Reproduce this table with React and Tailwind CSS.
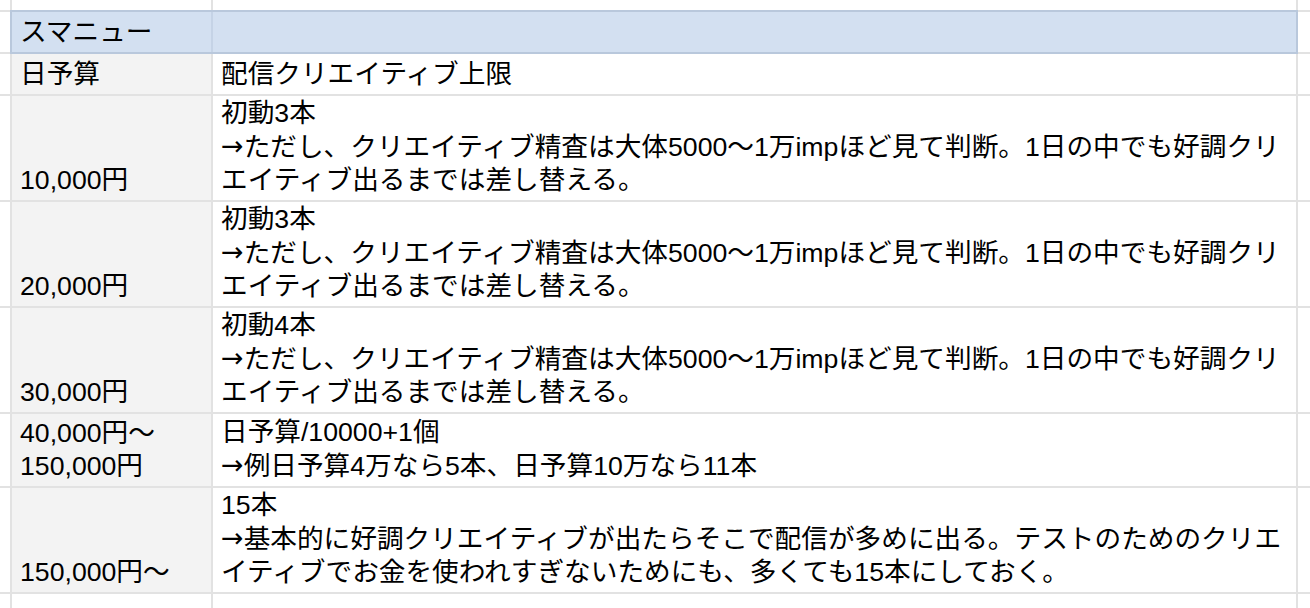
import React from "react";

const font = {
  fontFamily: '"Liberation Sans", "Noto Sans CJK JP", sans-serif',
};

function Arrow() {
  return (
    <span className="relative -top-[1px] font-['DejaVu_Sans',sans-serif] text-[27px]">
      →
    </span>
  );
}

function renderLine(l) {
  if (typeof l === "string" && l.startsWith("→")) {
    return (
      <>
        <Arrow />
        {l.slice(1)}
      </>
    );
  }
  return l;
}

function Cell({ lines, gray = false }) {
  return (
    <div
      className={`flex flex-col justify-end overflow-hidden pl-[8px] pb-[3px] text-[26.67px] leading-[33px] text-[#000] ${
        gray ? "bg-[#f3f3f3]" : "bg-white"
      }`}
    >
      {lines.map((l, i) => (
        <div key={i} className="whitespace-nowrap">
          {renderLine(l)}
        </div>
      ))}
    </div>
  );
}

const Blank = () => <div className="bg-white" />;

const rows = [
  {
    a: ["10,000円"],
    b: [
      "初動3本",
      "→ただし、クリエイティブ精査は大体5000〜1万impほど見て判断。1日の中でも好調クリ",
      "エイティブ出るまでは差し替える。",
    ],
  },
  {
    a: ["20,000円"],
    b: [
      "初動3本",
      "→ただし、クリエイティブ精査は大体5000〜1万impほど見て判断。1日の中でも好調クリ",
      "エイティブ出るまでは差し替える。",
    ],
  },
  {
    a: ["30,000円"],
    b: [
      "初動4本",
      "→ただし、クリエイティブ精査は大体5000〜1万impほど見て判断。1日の中でも好調クリ",
      "エイティブ出るまでは差し替える。",
    ],
  },
  {
    a: ["40,000円〜", "150,000円"],
    b: ["日予算/10000+1個", "→例日予算4万なら5本、日予算10万なら11本"],
  },
  {
    a: ["150,000円〜"],
    b: [
      "15本",
      "→基本的に好調クリエイティブが出たらそこで配信が多めに出る。テストのためのクリエ",
      "イティブでお金を使われすぎないためにも、多くても15本にしておく。",
    ],
  },
];

export default function App() {
  return (
    <div
      style={font}
      className="grid h-[608px] w-[1310px] grid-cols-[10px_199px_1083px_1fr] grid-rows-[10px_40px_40px_104px_104px_104px_72px_104px_14px] gap-[2px] overflow-hidden bg-[#e2e2e2]"
    >
      {/* top spacer row */}
      <Blank />
      <Blank />
      <Blank />
      <Blank />

      {/* header row */}
      <Blank />
      <div className="relative z-10 col-span-2 flex bg-[#d3e0f1] shadow-[0_0_0_2px_#b9c8dc]">
        <div className="flex w-[199px] flex-col justify-end pl-[8px] pb-[3px] text-[26.67px] leading-[33px] text-black">
          <div className="whitespace-nowrap">スマニュー</div>
        </div>
        <div className="w-[2px] bg-[#c5d3e6]" />
        <div className="flex-1" />
      </div>
      <Blank />

      {/* label row */}
      <Blank />
      <Cell gray lines={["日予算"]} />
      <Cell lines={["配信クリエイティブ上限"]} />
      <Blank />

      {rows.map((r, i) => (
        <React.Fragment key={i}>
          <Blank />
          <Cell gray lines={r.a} />
          <Cell lines={r.b} />
          <Blank />
        </React.Fragment>
      ))}

      {/* bottom partial row */}
      <Blank />
      <Blank />
      <Blank />
      <Blank />
    </div>
  );
}
